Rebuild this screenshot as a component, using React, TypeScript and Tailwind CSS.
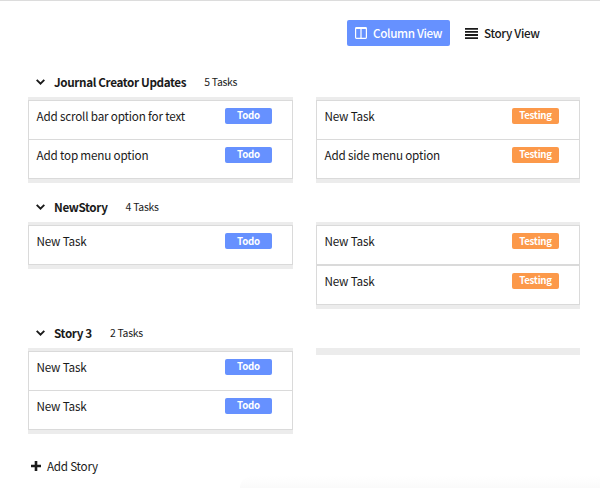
import React from 'react';

type Status = 'Todo' | 'Testing';
type Story = { name: string; count: number; todo: string[]; testing: string[] };

const stories: Story[] = [
  {
    name: 'Journal Creator Updates',
    count: 5,
    todo: ['Add scroll bar option for text', 'Add top menu option'],
    testing: ['New Task', 'Add side menu option'],
  },
  { name: 'NewStory', count: 4, todo: ['New Task'], testing: ['New Task', 'New Task'] },
  { name: 'Story 3', count: 2, todo: ['New Task', 'New Task'], testing: [] },
];

function Badge({ status }: { status: Status }) {
  return (
    <span
      className={`mt-[7px] flex h-4 w-[47px] items-center justify-center rounded-[2px] text-[9.7px] leading-none font-bold text-white ${
        status === 'Todo' ? 'bg-[#6691ff] tracking-[-0.2px]' : 'bg-[#fc994a] tracking-[-0.3px]'
      }`}
    >
      {status}
    </span>
  );
}

function Column({ tasks, status }: { tasks: string[]; status: Status }) {
  return (
    <div className={`bg-[#ececec] pt-[3px] pb-[4px] ${status === 'Todo' ? 'w-[265px]' : 'w-[264px]'}`}>
      {tasks.map((task, i) => (
        <div
          key={i}
          className={`flex h-10 items-start justify-between border border-[#dadada] bg-white pr-5 pl-[7.5px] ${
            i > 0 ? '-mt-[0.75px]' : ''
          }`}
        >
          <span className="mt-[6px] text-[11.7px] leading-[18px] tracking-[-0.19px]">{task}</span>
          <Badge status={status} />
        </div>
      ))}
    </div>
  );
}

export default function App() {
  return (
    <div className="relative h-[488px] w-[600px] overflow-hidden border-t border-[#dcdcdc] bg-white font-['Noto_Sans_CJK_SC',sans-serif] text-[#1a1a1a]">
      <nav className="flex h-[64px] items-start pt-[19px] pl-[347px]">
        <button className="flex h-[26px] w-[103px] items-center rounded-[2px] bg-[#6691ff] pl-2 text-[11.7px] font-medium tracking-[-0.35px] text-white">
          <svg width="12" height="12" viewBox="0 0 12 12" fill="none" stroke="currentColor">
            <rect x=".6" y=".6" width="10.8" height="10.8" rx=".8" strokeWidth="1.2" />
            <path d="M6 1v10M1 1.5h10" strokeWidth="1.2" />
          </svg>
          <span className="ml-[6px]">Column View</span>
        </button>
        <button className="ml-[15px] flex h-[26px] items-center text-[11.7px] font-medium tracking-[-0.35px]">
          <svg width="13" height="11" viewBox="0 0 13 11" fill="currentColor">
            <path d="M0 0h13v1.8H0zM0 3.05h13v1.8H0zM0 6.1h13v1.8H0zM0 9.2h13V11H0z" />
          </svg>
          <span className="ml-[6px]">Story View</span>
        </button>
      </nav>
      <main className="pl-7">
        {stories.map((story) => (
          <section key={story.name} className="h-[125.4px]">
            <header className="flex h-8 items-center pt-[2px] pl-[7.5px]">
              <svg width="9" height="6" viewBox="0 0 9 6" fill="none" stroke="currentColor" strokeWidth="1.9">
                <path d="M.7 .8 4.5 4.6 8.3 .8" />
              </svg>
              <h2 className="ml-[9.5px] text-[11.7px] leading-[18px] font-bold tracking-[-0.37px]">{story.name}</h2>
              <span className="ml-[18px] text-[10.4px] leading-[18px] tracking-[-0.25px]">{story.count} Tasks</span>
            </header>
            <div className="flex items-start gap-[23px]">
              <Column tasks={story.todo} status="Todo" />
              <Column tasks={story.testing} status="Testing" />
            </div>
          </section>
        ))}
        <button className="mt-4 flex items-center pl-[3px] text-[11.7px] leading-[18px] tracking-[-0.25px]">
          <svg width="10" height="10" viewBox="0 0 10 10" fill="none" stroke="currentColor" strokeWidth="2.6">
            <path d="M5 0v10M0 5h10" />
          </svg>
          <span className="ml-[6px]">Add Story</span>
        </button>
      </main>
      <div className="absolute right-0 bottom-0 h-3 w-[360px] rounded-tl-xl bg-linear-to-b from-white to-[#fafafa]" />
    </div>
  );
}
